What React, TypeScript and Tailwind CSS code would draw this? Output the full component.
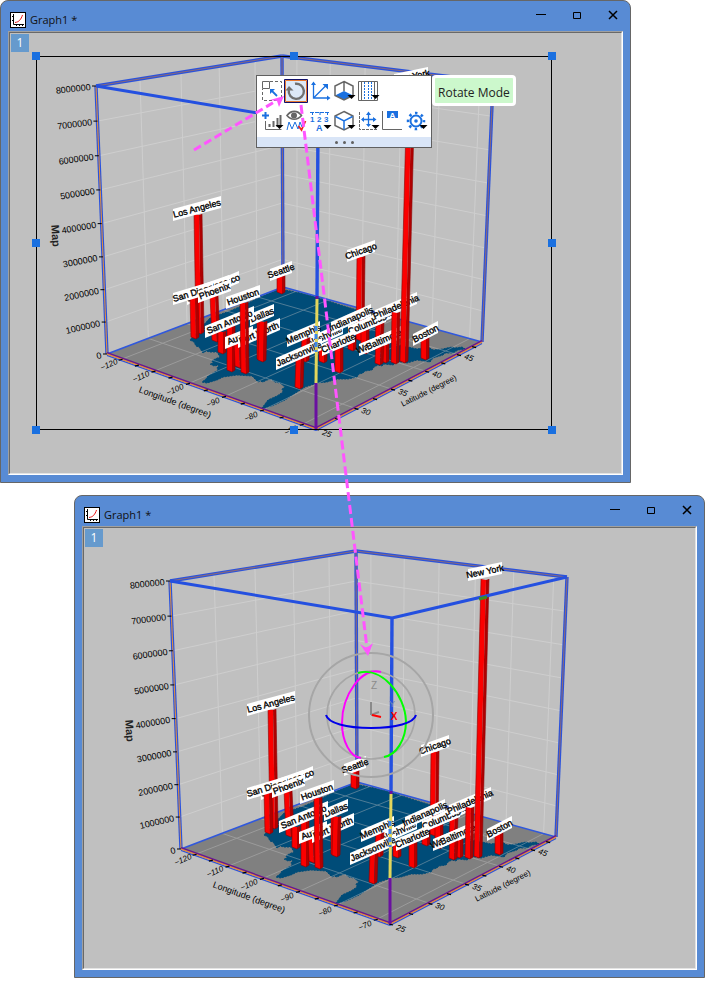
import React from 'react'

type Pt = [number, number]

// corners of the 3D box
const TL: Pt = [96, 86]
const TB: Pt = [282, 56]
const TR: Pt = [493, 82]
const TF: Pt = [318, 123]
const BL: Pt = [107, 354]
const BB: Pt = [283, 287]
const BR: Pt = [482, 342]
const BF: Pt = [316, 429]

// maps the unit square onto a quad, with perspective
function project(p0: Pt, p1: Pt, p2: Pt, p3: Pt) {
    const dx1 = p1[0] - p2[0], dx2 = p3[0] - p2[0], sx = p0[0] - p1[0] + p2[0] - p3[0]
    const dy1 = p1[1] - p2[1], dy2 = p3[1] - p2[1], sy = p0[1] - p1[1] + p2[1] - p3[1]
    const det = dx1 * dy2 - dx2 * dy1
    const g = (sx * dy2 - dx2 * sy) / det
    const h = (dx1 * sy - sx * dy1) / det
    const a = p1[0] - p0[0] + g * p1[0], b = p3[0] - p0[0] + h * p3[0]
    const d = p1[1] - p0[1] + g * p1[1], e = p3[1] - p0[1] + h * p3[1]
    return (u: number, v: number): Pt => {
        const w = g * u + h * v + 1
        return [(a * u + b * v + p0[0]) / w, (d * u + e * v + p0[1]) / w]
    }
}

const leftWall = project(BL, BB, TB, TL)
const rightWall = project(BB, BR, TR, TB)
const floor = project(BL, BF, BR, BB)

const lonU = (lon: number) => (lon + 124.6) / 57.8
const latU = (lat: number) => (lat - 25) / 24

const lons = [-120, -110, -100, -90, -80, -70]
const lats = [30, 35, 40, 45]
const levels = [1, 2, 3, 4, 5, 6, 7]

const MAP =
    '190,340 194,342 196,346 199,347 203,353 206,351 210,352 217,352 220,357 215,359 212,361 213,363 210,364 214,366 219,365 217,368 218,370 208,376 206,379 202,382 207,383 217,380 223,377 237,375 252,376 255,379 258,382 260,381 263,382 267,380 271,379 275,382 280,383 285,387 282,389 283,392 277,396 268,400 262,408 265,408 272,406 285,400 297,392 305,387 317,383 327,382 337,379 348,379 357,377 359,374 363,373 365,371 372,370 374,367 378,365 382,366 384,364 393,365 397,362 403,362 407,363 417,360 430,362 433,358 443,355 445,353 453,353 458,350 465,349 462,347 455,348 452,347 447,348 443,349 433,350 428,347 417,349 408,347 397,345 386,336 373,326 377,318 360,311 337,304 316,297 300,293 285,290 277,290 265,295 246,304 230,311 210,318 197,332'

type Item = {
    bar?: [number, number, number, number] // x at top, top, x at base, base
    label?: [string, number, number, number, number] // text, left point, right point
}

// back to front
const cities: Item[] = [
    { bar: [277, 275, 277, 292], label: ['Seattle', 270, 275, 292, 267] },
    { label: ['San Francisco', 187, 299, 239, 277] },
    { label: ['San Jose', 192, 294, 229, 281] },
    { bar: [194, 214, 196, 332], label: ['Los Angeles', 173, 215, 221, 202] },
    { bar: [190, 297, 191, 337], label: ['San Diego', 173, 299, 213, 287] },
    { bar: [210, 295, 212, 340], label: ['Phoenix', 198, 297, 231, 285] },
    { bar: [357, 256, 356, 339], label: ['Chicago', 347, 256, 375, 246] },
    { bar: [361, 327, 361, 352] },
    { bar: [376, 321, 375, 350] },
    { bar: [348, 336, 348, 349] },
    { label: ['Detroit', 366, 324, 392, 312] },
    { label: ['Columbus', 348, 332, 386, 316] },
    { bar: [319, 345, 319, 361], label: ['Nashville', 307, 344, 343, 328] },
    { label: ['Indianapolis', 331, 328, 371, 310] },
    { bar: [302, 336, 301, 360], label: ['Memphis', 287, 341, 320, 327] },
    { bar: [218, 331, 218, 352] },
    { bar: [227, 325, 227, 370] },
    { bar: [234, 342, 235, 366], label: ['Austin', 225, 343, 253, 332] },
    { label: ['Fort Worth', 238, 342, 280, 324] },
    { bar: [257, 322, 257, 359] },
    { bar: [259, 321, 258, 360], label: ['Dallas', 250, 320, 274, 310] },
    { label: ['San Antonio', 205, 332, 254, 312] },
    { bar: [240, 302, 241, 372], label: ['Houston', 226, 303, 260, 291] },
    { bar: [296, 358, 295, 387], label: ['Jacksonville', 276, 364, 322, 344] },
    { bar: [335, 345, 335, 371], label: ['Charlotte', 322, 350, 355, 336] },
    { bar: [381, 341, 381, 361], label: ['Washington', 359, 350, 398, 334] },
    { bar: [376, 342, 375, 363], label: ['Baltimore', 367, 347, 401, 332] },
    { label: ['Philadelphia', 375, 316, 417, 298] },
    { bar: [392, 312, 391, 362] },
    { bar: [407, 84, 400, 361], label: ['New York', 394, 80, 428, 73] },
    { bar: [421, 337, 421, 358], label: ['Boston', 413, 340, 438, 327] },
]

function Bar({ at }: { at: [number, number, number, number] }) {
    const [x, top, bx, base] = at
    return (
        <g>
            <polygon points={`${x},${top} ${x + 5},${top + 1} ${bx + 5},${base + 2} ${bx},${base}`} fill="#fb0000" />
            <polygon points={`${x + 5},${top + 1} ${x + 8},${top} ${bx + 8},${base} ${bx + 5},${base + 2}`} fill="#b00000" />
            <path d={`M${x} ${top}L${bx} ${base}L${bx + 5} ${base + 2}L${bx + 8} ${base}L${x + 8} ${top}`} fill="none" stroke="#8c0000" strokeWidth="0.6" />
        </g>
    )
}

function CityLabel({ at }: { at: [string, number, number, number, number] }) {
    const [text, x1, y1, x2, y2] = at
    const angle = (Math.atan2(y2 - y1, x2 - x1) * 180) / Math.PI
    const cx = (x1 + x2) / 2
    const cy = (y1 + y2) / 2
    return (
        <g>
            <polygon points={`${x1},${y1 - 6} ${x2},${y2 - 6} ${x2},${y2 + 6} ${x1},${y1 + 6}`} fill="#fff" />
            <text
                transform={`translate(${cx} ${cy}) rotate(${angle})`}
                y="3"
                textAnchor="middle"
                fontSize="9"
                fill="#000"
                stroke="#000"
                strokeWidth="0.35"
            >
                {text}
            </text>
        </g>
    )
}

function Line({ a, b, color, w }: { a: Pt; b: Pt; color: string; w: number }) {
    return <line x1={a[0]} y1={a[1]} x2={b[0]} y2={b[1]} stroke={color} strokeWidth={w} />
}

// blue edge with a brown core
function Edge({ a, b, core = '#8a6a78' }: { a: Pt; b: Pt; core?: string }) {
    return (
        <g>
            <Line a={a} b={b} color="#2a52dc" w={3.4} />
            <Line a={a} b={b} color={core} w={1.1} />
        </g>
    )
}

function AxisEdge({ a, b, dy }: { a: Pt; b: Pt; dy: number }) {
    return (
        <g>
            <Line a={[a[0], a[1] + dy]} b={[b[0], b[1] + dy]} color="#2a52dc" w={1.4} />
            <Line a={a} b={b} color="#e08a3c" w={1.6} />
            <Line a={[a[0], a[1] - dy]} b={[b[0], b[1] - dy]} color="#6a1590" w={1.4} />
        </g>
    )
}

function Plot({ children }: { children?: React.ReactNode }) {
    const zLabels = [0, 1, 2, 3, 4, 5, 6, 7, 8]
    const lonLabels: [string, number, number][] = [
        ['−120', 110, 365], ['−110', 142, 377], ['−100', 176, 390], ['−90', 214, 403], ['−80', 252, 417], ['−70', 292, 431],
    ]
    const latLabels: [string, number, number][] = [
        ['25', 326, 433], ['30', 365, 411], ['35', 402, 392], ['40', 436, 374], ['45', 468, 357],
    ]
    return (
        <svg
            viewBox="10 33 611 440"
            className="block w-full"
            fontFamily="'Liberation Sans', Arial, sans-serif"
            role="img"
            aria-label="3D bar graph of city population on a map"
        >
            {/* wall grid */}
            {lats.map((l) => (
                <Line key={'a' + l} a={leftWall(latU(l), 0)} b={leftWall(latU(l), 1)} color="#cecece" w={1} />
            ))}
            {lons.map((l) => (
                <Line key={'b' + l} a={rightWall(lonU(l), 0)} b={rightWall(lonU(l), 1)} color="#cecece" w={1} />
            ))}
            {levels.map((z) => (
                <g key={z}>
                    <Line a={leftWall(0, z / 8)} b={leftWall(1, z / 8)} color="#cecece" w={1} />
                    <Line a={rightWall(0, z / 8)} b={rightWall(1, z / 8)} color="#cecece" w={1} />
                </g>
            ))}

            {/* floor and map */}
            <polygon points={[BL, BB, BR, BF].join(' ')} fill="#808080" />
            <polygon points={MAP} fill="#004c78" stroke="#004c78" strokeWidth="1" strokeDasharray="2 1" />
            <g opacity="0.4">
                {lons.map((l) => (
                    <Line key={l} a={floor(lonU(l), 0)} b={floor(lonU(l), 1)} color="#c4c4c4" w={1} />
                ))}
                {lats.map((l) => (
                    <Line key={l} a={floor(0, latU(l))} b={floor(1, latU(l))} color="#c4c4c4" w={1} />
                ))}
            </g>

            {/* back edges */}
            <Line a={BL} b={BB} color="#3058dc" w={1.6} />
            <Line a={BB} b={BR} color="#3058dc" w={1.6} />
            <Edge a={TL} b={TB} />
            <Edge a={TB} b={TR} />
            <Edge a={TB} b={BB} />
            <Edge a={TR} b={BR} />
            <Edge a={TL} b={BL} core="#e09040" />
            <AxisEdge a={BL} b={BF} dy={1.3} />
            <AxisEdge a={BF} b={BR} dy={1.3} />

            {/* z axis */}
            {zLabels.map((z) => {
                const [x, y] = leftWall(0, z / 8)
                return (
                    <g key={z}>
                        <line x1={x - 4} y1={y} x2={x} y2={y} stroke="#000" strokeWidth="1" />
                        <text transform={`translate(${x - 5} ${y + 4}) rotate(${-6 - (8 - z)})`} textAnchor="end" fontSize="9" fill="#000">
                            {z ? z + '000000' : '0'}
                        </text>
                    </g>
                )
            })}
            <text transform="translate(52 236) rotate(86)" textAnchor="middle" fontSize="11" fontWeight="bold" fill="#222">
                Map
            </text>

            {/* floor ticks */}
            {[-120, -115, -110, -105, -100, -95, -90, -85, -80, -75, -70].map((l) => {
                const [x, y] = floor(lonU(l), 0)
                return <line key={l} x1={x - 3} y1={y + 1} x2={x + 1} y2={y} stroke="#000" strokeWidth="1.2" />
            })}
            {[25, 27.5, 30, 32.5, 35, 37.5, 40, 42.5, 45, 47.5].map((l) => {
                const [x, y] = floor(1, latU(l))
                return <line key={l} x1={x - 1} y1={y} x2={x + 3} y2={y + 1} stroke="#000" strokeWidth="1.2" />
            })}
            {lonLabels.map(([t, x, y]) => (
                <text key={t} transform={`translate(${x} ${y + 2}) rotate(-24)`} textAnchor="middle" fontSize="8" fontStyle="italic" fill="#000">
                    {t}
                </text>
            ))}
            {latLabels.map(([t, x, y]) => (
                <text key={t} transform={`translate(${x} ${y + 3}) rotate(20)`} textAnchor="middle" fontSize="8" fontStyle="italic" fill="#000">
                    {t}
                </text>
            ))}
            <text transform="translate(174 405) rotate(20)" textAnchor="middle" fontSize="9" fill="#000">
                Longitude (degree)
            </text>
            <text transform="translate(430 393) rotate(-27)" textAnchor="middle" fontSize="8" fill="#000">
                Latitude (degree)
            </text>

            {/* bars */}
            {cities.map((c, i) => (
                <g key={i}>
                    {c.bar && <Bar at={c.bar} />}
                    {c.label && <CityLabel at={c.label} />}
                </g>
            ))}

            {/* front edges */}
            <Line a={TL} b={TF} color="#2450e0" w={3} />
            <Line a={TF} b={TR} color="#2450e0" w={3} />
            <line x1="405" y1="104" x2="413" y2="102" stroke="#3c8a1e" strokeWidth="3" />
            <Line a={TF} b={[317, 297]} color="#2450e0" w={3.4} />
            <Line a={[317, 296]} b={[317, 299]} color="#6a10a0" w={3} />
            <Line a={[317, 299]} b={[316, 383]} color="#e2d65c" w={3} />
            <line x1="316" y1="326" x2="316" y2="352" stroke="#3c86e8" strokeWidth="3" strokeDasharray="5 3" />
            <Line a={[316, 383]} b={BF} color="#6a10a0" w={3} />
            {children}
        </svg>
    )
}

function Selection() {
    const handles: Pt[] = [[36, 56], [294, 56], [552, 56], [36, 243], [552, 243], [36, 430], [294, 430], [552, 430]]
    return (
        <g shapeRendering="crispEdges">
            <rect x="36.5" y="56.5" width="515" height="373" fill="none" stroke="#000" />
            {handles.map(([x, y]) => (
                <rect key={`${x}-${y}`} x={x - 4} y={y - 4} width="8" height="8" fill="#1a70e0" />
            ))}
        </g>
    )
}

function Gizmo() {
    return (
        <g fill="none" strokeWidth="2">
            <circle cx="297" cy="220" r="62" stroke="#a6a6a6" />
            <circle cx="297" cy="220" r="44" stroke="#a6a6a6" strokeWidth="1.6" />
            <path d="M307 177C288 171 268 200 268 228C268 246 276 262 287 263" stroke="#ff00ff" />
            <path d="M284 178C308 171 331 200 332 226C332 245 322 260 310 262" stroke="#00ff00" />
            <path d="M252 220C254 228 272 233 297 233S340 228 342 220" stroke="#0000e8" />
            <path d="M297 220V207M297 220L305 217" stroke="#8a8a8a" />
            <path d="M298 220L307 222" stroke="#ff0000" />
            <text x="300" y="194" fontSize="10" textAnchor="middle" fill="#8c8c8c">Z</text>
            <text x="318" y="212" fontSize="9" textAnchor="middle" fill="#7288b4">Y</text>
            <text x="320" y="225" fontSize="10" fontWeight="bold" textAnchor="middle" fill="#ff0000">X</text>
        </g>
    )
}

const BLUE = '#1a70e0'
const GRAY = '#666666'

function Drop() {
    return <path d="M15.500 16h8l-4 4z" fill="#000" />
}

const tools: [string, React.ReactNode][] = [
    ['Resize Mode', (
        <>
            <path d="M2.500 2.500h7v7h-7z" stroke={GRAY} />
            <path d="M10 2.500h11.500v19h-19V10" stroke={GRAY} strokeDasharray="3 2" />
            <path d="M17 17l-5-5" stroke={BLUE} strokeWidth="1.800" />
            <path d="M10 10h5l-5 5z" fill={BLUE} />
        </>
    )],
    ['Rotate Mode', (
        <>
            <path d="M0.500 0.500h23v23h-23z" stroke="#10106a" />
            <path d="M1.500 1.500h21v21h-21z" stroke="#e87830" />
            <path d="M4.800 11A7.600 7.600 0 1 0 11 4.800" stroke="#707070" strokeWidth="2.400" />
            <path d="M1.500 11.500L5 7 9.500 11.500z" fill="#707070" />
        </>
    )],
    ['Skew Mode', (
        <>
            <path d="M5.500 4v15H21M5.500 19L18 6.500" stroke={BLUE} strokeWidth="1.300" />
            <path d="M3 6l2.500-3.500L8 6zM19 16.500l3.500 2.500-3.500 2.500zM14.500 5H20v5.500z" fill={BLUE} />
        </>
    )],
    ['Planes', (
        <>
            <path d="M12 12L21 16.500 12 21 3 16.500z" fill={BLUE} />
            <path d="M12 2.500L21 7v9.500L12 21 3 16.500V7zM12 2.500V12" stroke={GRAY} strokeWidth="1.500" />
            <Drop />
        </>
    )],
    ['Grid Lines', (
        <>
            <path d="M2.500 2.500h19v19h-19z M5.500 2v20M18.500 2v20" stroke={GRAY} />
            <path d="M8.500 3v18M12.500 3v18M15.500 3v18" stroke={BLUE} strokeDasharray="2 1" />
            <Drop />
        </>
    )],
    ['Add Plot', (
        <>
            <path d="M5.500 3v7M2 6.500h7" stroke={BLUE} strokeWidth="2" />
            <path d="M5.500 12v8.500h16" stroke={GRAY} />
            <path d="M9.500 18v-3M13.500 18v-6M17.500 18V9M20.500 18V6" stroke={GRAY} strokeWidth="2" />
            <Drop />
        </>
    )],
    ['Show or Hide', (
        <>
            <path d="M3 6.500C7 1 13.500 1 17.500 6.500 13.500 11.500 7 11.500 3 6.500z" stroke={GRAY} strokeWidth="1.600" />
            <circle cx="10" cy="6.500" r="3" fill={GRAY} />
            <path d="M3 21l2-8 3 7 3-7 3 7 2-7 2 5" stroke={BLUE} />
            <path d="M14.500 17l3 4 4-9" stroke="#ee2222" strokeWidth="1.800" />
        </>
    )],
    ['Tick Labels', (
        <>
            <path d="M2 3.500h20" stroke={BLUE} strokeDasharray="4 1" />
            <path d="M4.500 3v3M12 3v3M19.500 3v3" stroke={BLUE} />
            <text x="2" y="13" fontSize="8" fontWeight="bold" fill={BLUE}>1</text>
            <text x="9" y="13" fontSize="8" fontWeight="bold" fill={BLUE}>2</text>
            <text x="16" y="13" fontSize="8" fontWeight="bold" fill={BLUE}>3</text>
            <text x="8" y="22" fontSize="9" fontWeight="bold" fill={BLUE}>A</text>
            <Drop />
        </>
    )],
    ['Frame', (
        <>
            <path d="M12 2.500L21 7v9.500L12 21 3 16.500V7z" stroke={GRAY} strokeWidth="1.500" />
            <path d="M3.500 7.500L12 12l8.500-4.500M12 12v8.500" stroke={BLUE} strokeWidth="1.500" />
            <Drop />
        </>
    )],
    ['Axes', (
        <>
            <path d="M3.500 3v17.500H22" stroke={GRAY} strokeDasharray="3 1" />
            <path d="M12.500 5v12M6 10.500h13" stroke={BLUE} strokeWidth="1.300" />
            <path d="M10 6l2.500-3.500L15 6zM10 15l2.500 3 2.500-3zM8 8l-3 2.500L8 13zM17 8l3.500 2.500L17 13z" fill={BLUE} />
            <Drop />
        </>
    )],
    ['Title', (
        <>
            <path d="M2.500 2v18.500H22" stroke={GRAY} />
            <path d="M7 2h11v7H7z" fill={BLUE} />
            <text x="12.500" y="8.500" fontSize="8" fontWeight="bold" textAnchor="middle" fill="#fff">A</text>
        </>
    )],
    ['Properties', (
        <>
            <circle cx="12" cy="12" r="5.500" stroke={BLUE} strokeWidth="2" />
            <circle cx="12" cy="12" r="1.800" fill={BLUE} />
            <circle cx="12" cy="12" r="8" stroke={BLUE} strokeWidth="2.500" strokeDasharray="2.500 3.783" strokeDashoffset="1.250" />
            <Drop />
        </>
    )],
]

function ToolButton({ tool, active }: { tool: [string, React.ReactNode]; active?: boolean }) {
    return (
        <button type="button" aria-label={tool[0]} className={active ? 'size-6 bg-[#dde9f8]' : 'size-6'}>
            <svg viewBox="0 0 24 24" fill="none" className="size-6" fontFamily="'Liberation Sans', sans-serif">
                {tool[1]}
            </svg>
        </button>
    )
}

function MiniToolbar() {
    return (
        <div className="absolute top-[42px] left-[246px] flex items-start">
            <div className="w-44 border border-[#606060] bg-white">
                <div className="flex px-[3px] pt-[3px]">
                    {tools.slice(0, 5).map((t, i) => (
                        <ToolButton key={t[0]} tool={t} active={i === 1} />
                    ))}
                </div>
                <div className="flex px-[3px] pt-1.5 pb-1">
                    {tools.slice(5).map((t) => (
                        <ToolButton key={t[0]} tool={t} />
                    ))}
                </div>
                <button type="button" aria-label="More" className="flex h-2.5 w-full items-center justify-center gap-[5px] bg-[#d9e5f7]">
                    <span className="size-[3px] rounded-full bg-[#606060]" />
                    <span className="size-[3px] rounded-full bg-[#606060]" />
                    <span className="size-[3px] rounded-full bg-[#606060]" />
                </button>
            </div>
            <div role="tooltip" className="rounded-sm border-3 border-white bg-[#ccf8cc] px-[3px] pt-1 text-[12px] leading-[21px] whitespace-nowrap text-[#222]">
                Rotate Mode
            </div>
        </div>
    )
}

function GraphWindow({ className, graphic, children }: { className: string; graphic: React.ReactNode; children?: React.ReactNode }) {
    return (
        <section className={`rounded-t-lg border border-[#666] bg-[#588bd4] px-[7px] pb-[7px] ${className}`}>
            <header className="flex h-[30px] items-center justify-between pr-1 pl-0.5">
                <div className="flex items-center gap-1 pt-2">
                    <svg viewBox="0 0 16 16" className="size-4" fill="none">
                        <rect x="0.500" y="0.500" width="15" height="15" fill="#fff" stroke="#000" />
                        <path d="M3.500 2v10.500H14M2 4.500h2M2 8.500h2M6.500 12v2M9.500 12v2M12.500 12v2" stroke="#000" />
                        <path d="M5 10.500C9 10 11 7.500 12.500 3" stroke="#ee1111" />
                    </svg>
                    <h1 className="text-[11px] leading-4 text-[#111]">Graph1 *</h1>
                </div>
                <div className="flex gap-6 pb-0.5">
                    <button type="button" aria-label="Minimize">
                        <svg viewBox="0 0 12 12" className="size-3" fill="none"><path d="M1 5.500h10" stroke="#000" /></svg>
                    </button>
                    <button type="button" aria-label="Maximize">
                        <svg viewBox="0 0 12 12" className="size-3" fill="none"><path d="M2.500 3.500h7v6h-7z" stroke="#000" /></svg>
                    </button>
                    <button type="button" aria-label="Close">
                        <svg viewBox="0 0 12 12" className="size-3" fill="none"><path d="M2 2l8 8M10 2l-8 8" stroke="#000" strokeWidth="1.500" /></svg>
                    </button>
                </div>
            </header>
            <div className="border border-t-[#a0a0a0] border-r-white border-b-white border-l-[#a0a0a0]">
                <div className="relative border border-t-[#696969] border-r-[#e3e3e3] border-b-[#e3e3e3] border-l-[#696969] bg-[#c0c0c0]">
                    {graphic}
                    <button type="button" className="absolute top-px left-px h-[18px] w-[18px] bg-[#669acd] text-[12px] leading-[18px] text-white">
                        1
                    </button>
                    {children}
                </div>
            </div>
        </section>
    )
}

function Arrows() {
    return (
        <svg viewBox="0 0 706 983" className="pointer-events-none absolute top-0 left-0 w-full" fill="none" aria-hidden="true">
            <g stroke="#ff55ff" strokeWidth="3">
                <path d="M194 150L276 101" strokeDasharray="8 4" />
                <path d="M301 105L367 648" strokeDasharray="9 4" />
            </g>
            <path d="M284 96L279 107 277 101 270 100z" fill="#ff55ff" />
            <path d="M368 656L360 644 366.500 648 373 643z" fill="#ff55ff" />
        </svg>
    )
}

export default function App() {
    return (
        <main className="relative bg-white pb-[5px] font-['Open_Sans','Noto_Sans',sans-serif]">
            <GraphWindow className="mr-[75px]" graphic={<Plot><Selection /></Plot>}>
                <MiniToolbar />
            </GraphWindow>
            <GraphWindow className="mt-3 mr-px ml-[74px]" graphic={<Plot><Gizmo /></Plot>} />
            <Arrows />
        </main>
    )
}
